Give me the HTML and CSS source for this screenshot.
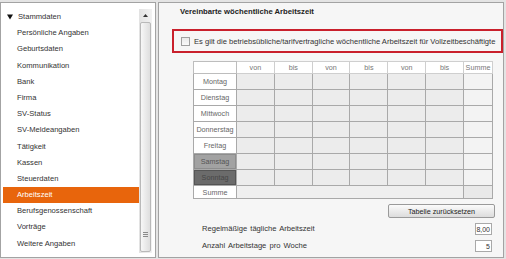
FILE: index.html
```html
<!DOCTYPE html>
<html lang="de">
<head>
<meta charset="UTF-8">
<title>Arbeitszeit</title>
<link rel="stylesheet" href="styles.css">
</head>
<body>
<div class="window">
    <div class="nav">
        <ul class="nav-list">
            <li class="nav-group"><svg class="caret" width="6" height="6" viewBox="0 0 6 6"><path d="M0 0.5 H6 L3 5.5 Z" fill="#111"/></svg>Stammdaten</li>
            <li>Persönliche Angaben</li>
            <li>Geburtsdaten</li>
            <li>Kommunikation</li>
            <li>Bank</li>
            <li>Firma</li>
            <li>SV-Status</li>
            <li>SV-Meldeangaben</li>
            <li>Tätigkeit</li>
            <li>Kassen</li>
            <li>Steuerdaten</li>
            <li class="active">Arbeitszeit</li>
            <li>Berufsgenossenschaft</li>
            <li>Vorträge</li>
            <li>Weitere Angaben</li>
        </ul>
        <div class="scrollbar">
            <div class="scroll-up"><svg width="5" height="3" viewBox="0 0 5 3"><path d="M0 3 L2.5 0 L5 3 Z" fill="#333"/></svg></div>
            <div class="scroll-thumb"><span class="grip"></span></div>
        </div>
    </div>

    <div class="content">
        <div class="heading">Vereinbarte wöchentliche Arbeitszeit</div>

        <label class="full-time">
            <span class="checkbox"></span>
            Es gilt die betriebsübliche/tarifvertragliche wöchentliche Arbeitszeit für Vollzeitbeschäftigte
        </label>

        <table class="week">
            <colgroup>
                <col class="col-day">
                <col><col><col><col><col><col>
                <col class="col-sum">
            </colgroup>
            <tr class="head">
                <th></th>
                <th>von</th><th>bis</th><th>von</th><th>bis</th><th>von</th><th>bis</th>
                <th>Summe</th>
            </tr>
            <tr><td class="day">Montag</td><td></td><td></td><td></td><td></td><td></td><td></td><td class="sum"></td></tr>
            <tr><td class="day">Dienstag</td><td></td><td></td><td></td><td></td><td></td><td></td><td class="sum"></td></tr>
            <tr><td class="day">Mittwoch</td><td></td><td></td><td></td><td></td><td></td><td></td><td class="sum"></td></tr>
            <tr><td class="day">Donnerstag</td><td></td><td></td><td></td><td></td><td></td><td></td><td class="sum"></td></tr>
            <tr><td class="day">Freitag</td><td></td><td></td><td></td><td></td><td></td><td></td><td class="sum"></td></tr>
            <tr><td class="day saturday">Samstag</td><td></td><td></td><td></td><td></td><td></td><td></td><td class="sum"></td></tr>
            <tr><td class="day sunday">Sonntag</td><td></td><td></td><td></td><td></td><td></td><td></td><td class="sum"></td></tr>
            <tr class="total"><td class="day">Summe</td><td colspan="6"></td><td class="sum-total"></td></tr>
        </table>

        <div class="reset-row">
            <button class="btn-reset">Tabelle zurücksetzen</button>
        </div>

        <div class="field-row first">
            <span class="field-label">Regelmäßige tägliche Arbeitszeit</span>
            <span class="field-value">8,00</span>
        </div>
        <div class="field-row">
            <span class="field-label">Anzahl Arbeitstage pro Woche</span>
            <span class="field-value">5</span>
        </div>
    </div>
</div>
</body>
</html>
```

FILE: styles.css
```css
body {
    margin: 0;
    background-color: #e4e4e4;
    font-family: "Liberation Sans", Arial, sans-serif;
    color: #333;
}
.window {
    display: flex;
    gap: 2px;
    height: 259px;
    padding-top: 2px;
    box-sizing: border-box;
}
.nav {
    width: 156px;
    height: 256px;
    box-sizing: border-box;
    background-color: #fff;
    border: 1px solid #a3a3a3;
    display: flex;
    padding: 6px 3px 4px 2px;
}
.nav-list {
    list-style: none;
    margin: 0;
    padding: 0;
    flex: 1;
    font-size: 7.6px;
}
.nav-list li {
    height: 16.2px;
    line-height: 16.2px;
    padding-left: 14px;
    color: #333;
    white-space: nowrap;
}
.nav-list li.nav-group {
    padding-left: 4px;
}
.caret {
    margin-right: 5px;
    vertical-align: -0.5px;
}
.nav-list li.active {
    background-color: #e8650c;
    color: #fff;
}
.scrollbar {
    width: 13px;
    background: linear-gradient(to right, #e2e2e2, #f2f2f2);
    display: flex;
    flex-direction: column;
    align-items: center;
}
.scroll-up {
    height: 13px;
    display: flex;
    align-items: center;
    justify-content: center;
}
.scroll-thumb {
    width: 11px;
    flex: 1;
    margin-bottom: 1px;
    box-sizing: border-box;
    border: 1px solid #b9b9b9;
    border-radius: 2px;
    background: linear-gradient(to right, #f7f7f7, #dedede);
    display: flex;
    align-items: flex-end;
    justify-content: center;
    padding-bottom: 14px;
}
.grip {
    width: 5px;
    height: 5px;
    background: repeating-linear-gradient(to bottom, #8a8a8a 0 1px, transparent 1px 2px);
}
.content {
    width: 346px;
    height: 256px;
    box-sizing: border-box;
    background-color: #f6f6f6;
    border: 1px solid #a3a3a3;
    padding: 4px 0 0 13px;
}
.heading {
    font-size: 7.7px;
    font-weight: bold;
    color: #222;
    padding-left: 8px;
    height: 10px;
    line-height: 10px;
}
.full-time {
    display: flex;
    align-items: center;
    margin-top: 12px;
    width: 331px;
    height: 24px;
    box-sizing: border-box;
    border: 2px solid #c9202c;
    padding-left: 7px;
    font-size: 7.6px;
    color: #333;
    white-space: nowrap;
}
.checkbox {
    width: 7px;
    height: 7px;
    border: 1px solid #a0a0a0;
    background: linear-gradient(#e9e9e9, #fafafa);
    margin-right: 4px;
    flex: none;
}
.week {
    margin: 8px 0 0 21px;
    border-collapse: collapse;
    table-layout: fixed;
    width: 300px;
    font-size: 7.2px;
    color: #666;
}
.col-day { width: 43px; }
.col-sum { width: 29px; }
.week th, .week td {
    border: 1px solid #a9a9a9;
    padding: 0;
    height: 15px;
    text-align: center;
    background-color: #ececec;
}
.week tr.head th {
    height: 11px;
    background-color: #fff;
    border-color: #cfcfcf;
    font-weight: normal;
    color: #777;
}
.week tr.head th:first-child {
    border-color: #bdbdbd;
}
.week td.day {
    background-color: #fff;
    color: #666;
}
.week td.saturday {
    background-color: #a2a2a2;
    color: #555;
    box-shadow: inset 0 0 0 1px #8d8d8d;
}
.week td.sunday {
    background-color: #6b6b6b;
    color: #474747;
    box-shadow: inset 0 0 0 1px #555;
}
.week td.sum {
    background-color: #f3f3f3;
}
.week tr.total td {
    height: 12px;
    background-color: #efefef;
}
.week tr.total td.day {
    background-color: #fff;
}
.week tr.total td.sum-total {
    background-color: #e9e9e9;
}
.reset-row {
    display: flex;
    justify-content: flex-end;
    width: 323px;
    margin-top: 5px;
}
.btn-reset {
    width: 107px;
    height: 14px;
    padding: 0;
    border: 1px solid #9a9a9a;
    border-radius: 2px;
    background: linear-gradient(#fbfbfb, #dcdcdc);
    font-family: "Liberation Sans", Arial, sans-serif;
    font-size: 7.2px;
    color: #222;
}
.field-row {
    display: flex;
    align-items: center;
    justify-content: space-between;
    width: 320px;
    padding-left: 30px;
    box-sizing: border-box;
    height: 17px;
    font-size: 7.6px;
    word-spacing: 1px;
    color: #333;
}
.field-row.first {
    margin-top: 2px;
}
.field-value {
    width: 17px;
    height: 12px;
    line-height: 11px;
    box-sizing: border-box;
    border: 1px solid #a9a9a9;
    background-color: #fff;
    text-align: right;
    padding-right: 1px;
    font-size: 7px;
    word-spacing: 0;
}
```
